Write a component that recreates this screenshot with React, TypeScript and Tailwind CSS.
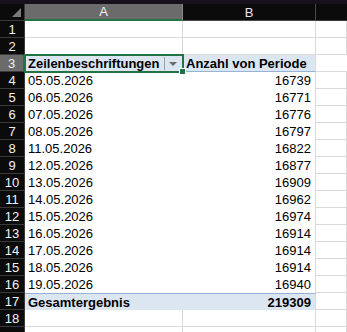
const rows = [
  ['05.05.2026', '16739'],
  ['06.05.2026', '16771'],
  ['07.05.2026', '16776'],
  ['08.05.2026', '16797'],
  ['11.05.2026', '16822'],
  ['12.05.2026', '16877'],
  ['13.05.2026', '16909'],
  ['14.05.2026', '16962'],
  ['15.05.2026', '16974'],
  ['16.05.2026', '16914'],
  ['17.05.2026', '16914'],
  ['18.05.2026', '16914'],
  ['19.05.2026', '16940'],
];

const rowHead = 'flex items-center justify-center h-[17px] border-b border-r border-[#3a3a3a] bg-[#0b0b0b] text-[#f2f2f2]';
const grid = 'h-[17px] border-b border-r border-[#d9d9d9] bg-white';

const App = () => {
  return (
    <div
      className="w-[347px] h-[332px] overflow-hidden bg-white text-[13px] leading-none text-black"
      style={{ fontFamily: '"Liberation Sans", Arial, sans-serif' }}
    >
      <div className="h-[4px] bg-[#17111d]" />
      <div className="grid grid-cols-[25px_158px_133px_1fr]">
        {/* column headers */}
        <div className="relative h-[17px] bg-[#0b0b0b] border-r border-b border-[#3a3a3a]">
          <div className="absolute right-[3px] bottom-[3px] w-0 h-0 border-l-[9px] border-l-transparent border-b-[9px] border-b-[#7a7a7a]" />
        </div>
        <div className="h-[17px] flex items-center justify-center bg-[#6b6b6b] text-[#f0f0f0] border-r border-[#8a8a8a] border-b-2 border-b-[#217346]">
          A
        </div>
        <div className="h-[17px] flex items-center justify-center bg-[#0b0b0b] text-[#e6e6e6] border-r border-b border-[#4a4a4a]">
          B
        </div>
        <div className="h-[17px] bg-[#0b0b0b] border-b border-[#3a3a3a]" />

        {/* rows 1-2 */}
        {[1, 2].map((n) => (
          <div key={n} className="contents">
            <div className={rowHead}>{n}</div>
            <div className={grid} />
            <div className={grid} />
            <div className={grid} />
          </div>
        ))}

        {/* row 3 - pivot header */}
        <div className="flex items-center justify-center h-[17px] bg-[#6b6b6b] text-[#f2f2f2] border-b border-[#3a3a3a] border-r-2 border-r-[#217346]">
          3
        </div>
        <div className="relative h-[17px] bg-[#dce6f1] font-bold flex items-center pl-[3px]">
          Zeilenbeschriftungen
          <div className="absolute right-[2px] top-[2px] w-[17px] h-[13px] border-l border-[#9aa3ad] flex items-center justify-center">
            <div className="w-0 h-0 border-l-[4px] border-r-[4px] border-t-[4px] border-l-transparent border-r-transparent border-t-[#6b6b6b]" />
          </div>
          <div className="absolute -left-[1px] -top-[1px] -right-[1px] -bottom-[1px] border-2 border-[#217346] pointer-events-none" />
          <div className="absolute -right-[3px] -bottom-[3px] w-[5px] h-[5px] bg-[#217346] border border-white box-content" />
        </div>
        <div className="h-[17px] bg-[#dce6f1] font-bold flex items-center pl-[3px] border-b border-[#95b3d7] border-r border-r-[#d9d9d9]">
          Anzahl von Periode
        </div>
        <div className="h-[17px] border-b border-[#d9d9d9] bg-white" />

        {/* data rows */}
        {rows.map(([d, v], i) => (
          <div key={d} className="contents">
            <div className={rowHead}>{i + 4}</div>
            <div className="h-[17px] bg-white flex items-center pl-[3px]">{d}</div>
            <div className="h-[17px] bg-white flex items-center justify-end pr-[4px] border-r border-[#d9d9d9]">{v}</div>
            <div className={grid} />
          </div>
        ))}

        {/* total */}
        <div className={rowHead}>17</div>
        <div className="h-[17px] bg-[#dce6f1] border-t border-[#95b3d7] font-bold flex items-center pl-[3px]">
          Gesamtergebnis
        </div>
        <div className="h-[17px] bg-[#dce6f1] border-t border-[#95b3d7] border-r border-r-[#d9d9d9] font-bold flex items-center justify-end pr-[4px]">
          219309
        </div>
        <div className={grid} />

        {/* empty rows */}
        <div className={rowHead}>18</div>
        <div className={grid} />
        <div className={grid} />
        <div className={grid} />
        <div className={rowHead} />
        <div className={grid} />
        <div className={grid} />
        <div className={grid} />
      </div>
    </div>
  );
};

export default App;
